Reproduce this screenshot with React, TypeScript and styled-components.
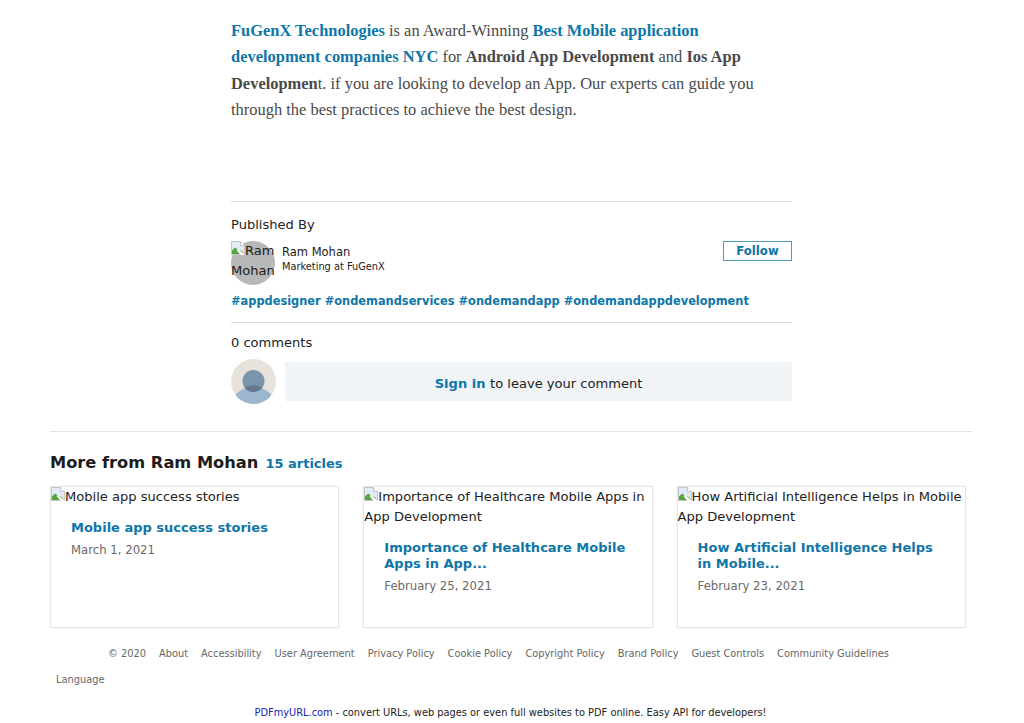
import styled, { createGlobalStyle } from 'styled-components';

const GlobalStyle = createGlobalStyle`
  html, body {
    margin: 0;
    padding: 0;
    background: #ffffff;
    font-family: "DejaVu Sans", Verdana, sans-serif;
    color: #1c1c1c;
  }
`;

const Page = styled.div`
  width: 1024px;
  height: 723px;
  overflow: hidden;
  display: flex;
  flex-direction: column;
`;

const Article = styled.main`
  width: 561px;
  margin-left: 231px;
  padding-top: 18px;
`;

const Intro = styled.p`
  margin: 0;
  height: 183px;
  width: 530px;
  font-family: "Liberation Serif", "Times New Roman", serif;
  font-size: 16.45px;
  line-height: 26.33px;
  color: #4a4a4a;
  b { font-weight: 700; }
`;

const BlueBold = styled.b`
  color: #0f76a8;
`;

const Rule = styled.hr`
  margin: 0;
  border: 0;
  height: 1px;
  background: #dcdcdc;
`;

const SectionLabel = styled.div`
  font-size: 13.05px;
  line-height: 20px;
  color: #222222;
`;

const PublishedLabel = styled(SectionLabel)`
  margin-top: 13px;
`;

const AuthorRow = styled.div`
  display: flex;
  align-items: flex-start;
  margin-top: 6px;
  height: 44px;
`;

const AuthorPhoto = styled.div`
  width: 44px;
  height: 44px;
  flex: none;
  border-radius: 50%;
  background: #b8b8b8;
  font-size: 13.05px;
  line-height: 20px;
`;

const BrokenIcon = styled.svg`
  width: 14px;
  height: 14px;
  vertical-align: baseline;
`;

const AuthorInfo = styled.div`
  flex: 1;
  margin-left: 7px;
  padding-top: 3px;
`;

const AuthorName = styled.div`
  font-size: 11.5px;
  line-height: 15px;
  padding-top: 1px;
`;

const AuthorRole = styled.div`
  font-size: 9.8px;
  line-height: 14px;
`;

const FollowButton = styled.button`
  width: 69px;
  height: 20px;
  padding: 0;
  background: #ffffff;
  border: 1px solid #4f9abf;
  font-family: inherit;
  font-size: 11.7px;
  font-weight: 700;
  color: #0f76a8;
`;

const Tags = styled.div`
  margin-top: 8px;
  height: 29px;
  font-size: 11.4px;
  line-height: 16px;
  font-weight: 700;
  color: #0f76a8;
  white-space: nowrap;
`;

const CommentsLabel = styled(SectionLabel)`
  margin-top: 10px;
`;

const CommentRow = styled.div`
  display: flex;
  align-items: center;
  gap: 9px;
  margin-top: 6px;
`;

const Viewer = styled.svg`
  width: 45px;
  height: 45px;
  flex: none;
`;

const SignInBox = styled.div`
  flex: 1;
  height: 39px;
  box-sizing: border-box;
  padding-top: 4px;
  background: #f0f4f7;
  display: flex;
  align-items: center;
  justify-content: center;
  font-size: 13.05px;
  color: #222222;
`;

const SignIn = styled.b`
  color: #0f76a8;
  white-space: pre;
`;

const MoreSection = styled.section`
  margin: 27px 51px 0 50px;
  border-top: 1px solid #e2e2e2;
  padding-top: 20px;
`;

const MoreHeading = styled.div`
  display: flex;
  align-items: baseline;
  gap: 7px;
  height: 34px;
  line-height: 22px;
`;

const MoreTitle = styled.h2`
  margin: 0;
  font-size: 16.25px;
  font-weight: 700;
  color: #1c1c1c;
`;

const ArticleCount = styled.span`
  font-size: 13px;
  font-weight: 700;
  color: #0f76a8;
`;

const Cards = styled.div`
  display: flex;
  gap: 24px;
`;

const Card = styled.article`
  width: 289.3px;
  height: 142px;
  box-sizing: border-box;
  border: 1px solid #e6e6e6;
  box-shadow: 0 0 1px #d8d8d8;
`;

const CardAlt = styled.div`
  font-size: 13.05px;
  line-height: 20px;
  color: #222222;
`;

const CardBody = styled.div`
  padding: 13px 20px 0;
`;

const CardTitle = styled.div`
  font-size: 13px;
  line-height: 16px;
  font-weight: 700;
  color: #0f76a8;
`;

const CardDate = styled.div`
  margin-top: 6px;
  font-size: 11.7px;
  line-height: 16px;
  color: #6a6a6a;
`;

const FooterLinks = styled.nav`
  display: flex;
  gap: 13px;
  margin: 19px 0 0 108px;
  font-size: 9.84px;
  line-height: 14px;
  color: #666666;
  white-space: nowrap;
`;

const Language = styled.div`
  margin: 12px 0 0 56px;
  font-size: 9.84px;
  line-height: 14px;
  color: #666666;
`;

const PdfNote = styled.div`
  margin-top: 19px;
  text-align: center;
  font-size: 9.83px;
  line-height: 14px;
  color: #222222;
  padding-right: 3px;
`;

const PdfLink = styled.span`
  color: #2020b0;
`;

const Broken = () => (
  <BrokenIcon viewBox="0 0 14 14">
    <path d="M.5.5h9l4 4v9H.5z" fill="#e2eaf7" stroke="#c4c4c4" strokeWidth="1" />
    <path d="M9.5.5v4h4" fill="#ffffff" stroke="#c4c4c4" strokeWidth="1" />
    <path d="M1 13V9.5l3-3 3 2 4 1.5 2 3z" fill="#56a63c" />
    <path d="M14 14H9.5L5.5 9 7.5 8z" fill="#ffffff" />
  </BrokenIcon>
);

const cards = [
  { alt: 'Mobile app success stories', title: 'Mobile app success stories', date: 'March 1, 2021' },
  { alt: 'Importance of Healthcare Mobile Apps in App Development', title: 'Importance of Healthcare Mobile Apps in App...', date: 'February 25, 2021' },
  { alt: 'How Artificial Intelligence Helps in Mobile App Development', title: 'How Artificial Intelligence Helps in Mobile...', date: 'February 23, 2021' },
];

const links = ['© 2020', 'About', 'Accessibility', 'User Agreement', 'Privacy Policy', 'Cookie Policy', 'Copyright Policy', 'Brand Policy', 'Guest Controls', 'Community Guidelines'];

export default function App() {
  return (
    <Page>
      <GlobalStyle />
      <Article>
        <Intro>
          <BlueBold>FuGenX Technologies</BlueBold> is an Award-Winning <BlueBold>Best Mobile application development companies NYC</BlueBold> for <b>Android App Development</b> and <b>Ios App Developmen</b>t. if you are looking to develop an App. Our experts can guide you through the best practices to achieve the best design.
        </Intro>
        <Rule />
        <PublishedLabel>Published By</PublishedLabel>
        <AuthorRow>
          <AuthorPhoto><Broken />Ram Mohan</AuthorPhoto>
          <AuthorInfo>
            <AuthorName>Ram Mohan</AuthorName>
            <AuthorRole>Marketing at FuGenX</AuthorRole>
          </AuthorInfo>
          <FollowButton type="button">Follow</FollowButton>
        </AuthorRow>
        <Tags>#appdesigner #ondemandservices #ondemandapp #ondemandappdevelopment</Tags>
        <Rule />
        <CommentsLabel>0 comments</CommentsLabel>
        <CommentRow>
          <Viewer viewBox="0 0 45 45">
            <defs>
              <clipPath id="viewer-circle"><circle cx="22.5" cy="22.5" r="22.5" /></clipPath>
            </defs>
            <g clipPath="url(#viewer-circle)">
              <rect width="45" height="45" fill="#e7e3dc" />
              <ellipse cx="22.5" cy="44" rx="21" ry="16" fill="#9db6cf" />
              <circle cx="22.5" cy="22" r="11" fill="#7a94ae" />
              <path d="M13.5 28.4a11 11 0 0 0 18 0a20 20 0 0 0-18 0z" fill="#64798f" />
            </g>
          </Viewer>
          <SignInBox><SignIn>Sign in </SignIn>to leave your comment</SignInBox>
        </CommentRow>
      </Article>
      <MoreSection>
        <MoreHeading>
          <MoreTitle>More from Ram Mohan</MoreTitle>
          <ArticleCount>15 articles</ArticleCount>
        </MoreHeading>
        <Cards>
          {cards.map((card) => (
            <Card key={card.title}>
              <CardAlt><Broken />{card.alt}</CardAlt>
              <CardBody>
                <CardTitle>{card.title}</CardTitle>
                <CardDate>{card.date}</CardDate>
              </CardBody>
            </Card>
          ))}
        </Cards>
      </MoreSection>
      <FooterLinks>
        {links.map((link) => <span key={link}>{link}</span>)}
      </FooterLinks>
      <Language>Language</Language>
      <PdfNote><PdfLink>PDFmyURL.com</PdfLink> - convert URLs, web pages or even full websites to PDF online. Easy API for developers!</PdfNote>
    </Page>
  );
}
